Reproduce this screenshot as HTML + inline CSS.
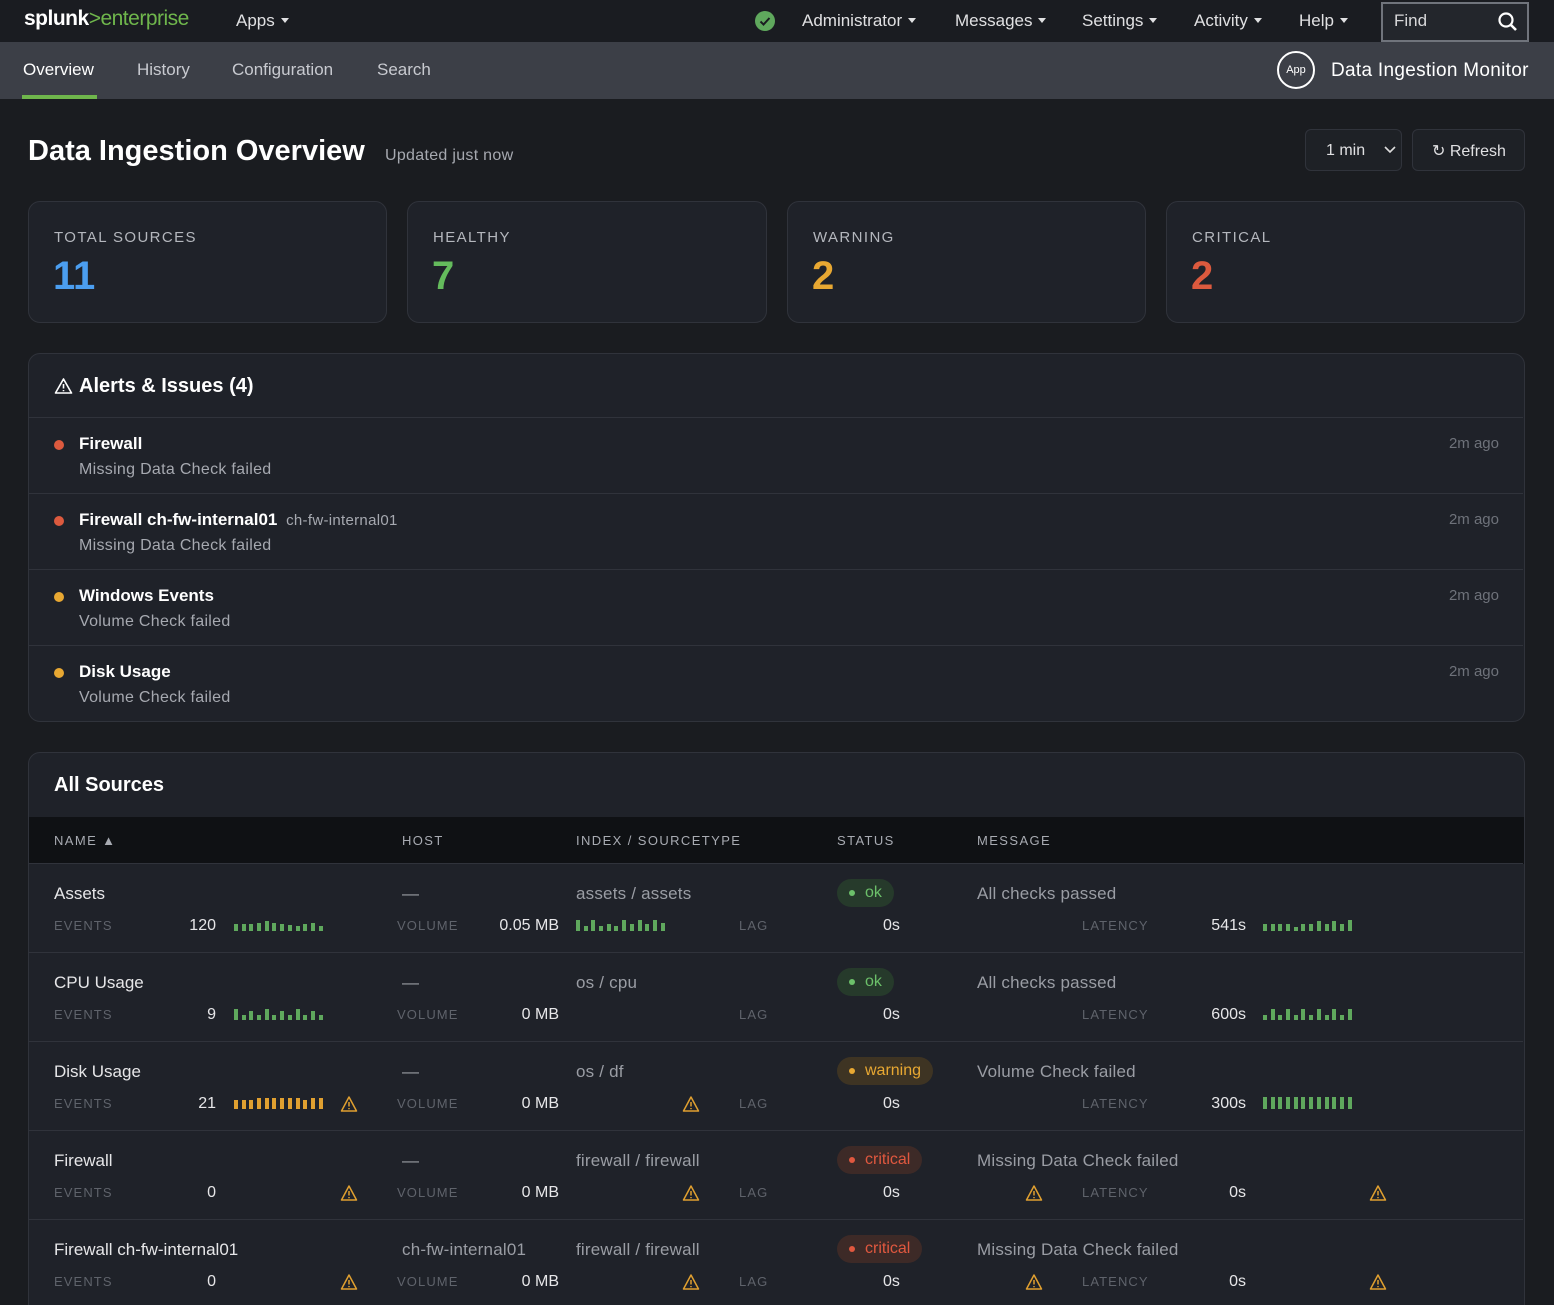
<!DOCTYPE html>
<html style="overflow:hidden"><head><meta charset="utf-8"><style>
*{box-sizing:border-box;margin:0;padding:0}
html,body{width:1554px;height:1305px;overflow:hidden}
body{background:#1a1c20;font-family:"Liberation Sans",sans-serif;color:#e8e8ea;position:relative}
.a{position:absolute;white-space:nowrap}
.top{position:absolute;left:0;top:0;width:1554px;height:42px;background:#1a1c21}
.sub{position:absolute;left:0;top:42px;width:1554px;height:57px;background:#3c3f47}
.nav{font-size:17px;color:#e0e0e2;top:11px}
.tri{display:inline-block;width:0;height:0;border-left:4px solid transparent;border-right:4px solid transparent;border-top:5px solid #e0e0e2;margin-left:6px;vertical-align:3px}
.tab{font-size:17px;color:#c8cad0;top:60px}
.card{position:absolute;background:#1f2229;border:1px solid #30333b;border-radius:12px}
.lbl{font-size:15px;letter-spacing:1.4px;color:#b4b7bd}
.num{font-size:40px;font-weight:bold}
.arow{position:absolute;left:29px;width:1494px;height:76px;border-top:1px solid #30333b}
.dot{position:absolute;left:25px;top:22px;width:10px;height:10px;border-radius:50%}
.at{position:absolute;left:50px;top:16px;font-size:17px;font-weight:bold;color:#fff}
.as{position:absolute;left:50px;top:43px;font-size:16px;color:#a6a9b0;letter-spacing:0.3px}
.ago{position:absolute;right:24px;top:17px;font-size:15px;color:#6e727a}
.row{position:absolute;left:29px;width:1494px;height:89px;border-top:1px solid #30333b}
.n{position:absolute;top:20px;font-size:17px;color:#e6e6e8;white-space:nowrap}
.g{position:absolute;top:20px;font-size:17px;color:#9a9da4;white-space:nowrap;letter-spacing:0.2px}
.k{position:absolute;top:54px;font-size:13px;letter-spacing:1.1px;color:#5f636b}
.v{position:absolute;top:53px;font-size:16px;color:#e6e6e8;text-align:right;white-space:nowrap}
.sp{position:absolute;top:55px;height:12px;display:flex;align-items:flex-end;gap:3.7px}
.sp i{display:block;width:4px;background:#5fa85d}
.sp.y i{background:#e0a030}
.w{position:absolute;top:53px;width:18px;height:18px}
.pill{position:absolute;top:15px;height:28px;border-radius:14px;font-size:16px;padding:0 12px 0 28px;line-height:28px}
.pill:before{content:"";position:absolute;left:12px;top:11px;width:6px;height:6px;border-radius:50%;background:currentColor}
.ok{background:#263a2b;color:#6cc06a}
.wa{background:#3e3423;color:#e8a832}
.cr{background:#3d2a27;color:#e0583f}
.th{font-size:13px;letter-spacing:1.4px;color:#a8abb2;top:833px}
</style></head><body>
<div class="top"></div>
<div class="a" style="left:24px;top:7px;font-size:21px;font-weight:bold;color:#fff;letter-spacing:-0.5px">splunk<span style="color:#6fb64c;font-weight:normal">&gt;enterprise</span></div>
<div class="a nav" style="left:236px">Apps<span class="tri"></span></div>
<svg class="a" style="left:754px;top:10px" width="22" height="22"><circle cx="11" cy="11" r="10" fill="#5fa85d"/><path d="M6.5 11.5l3 3 6-6.5" stroke="#1a1c21" stroke-width="2" fill="none"/></svg>
<div class="a nav" style="left:802px">Administrator<span class="tri"></span></div>
<div class="a nav" style="left:955px">Messages<span class="tri"></span></div>
<div class="a nav" style="left:1082px">Settings<span class="tri"></span></div>
<div class="a nav" style="left:1194px">Activity<span class="tri"></span></div>
<div class="a nav" style="left:1299px">Help<span class="tri"></span></div>
<div class="a" style="left:1381px;top:2px;width:148px;height:40px;border:2px solid #70747c;background:#23262c"></div>
<div class="a" style="left:1394px;top:11px;font-size:17px;color:#d8d8da">Find</div>
<svg class="a" style="left:1497px;top:11px" width="22" height="22"><circle cx="9" cy="9" r="6.5" stroke="#fff" stroke-width="2.2" fill="none"/><path d="M14 14l5 5" stroke="#fff" stroke-width="2.6"/></svg>
<div class="sub"></div>
<div class="a tab" style="left:23px;color:#fff">Overview</div>
<div class="a" style="left:22px;top:95px;width:75px;height:4px;background:#6fb64c"></div>
<div class="a tab" style="left:137px">History</div>
<div class="a tab" style="left:232px">Configuration</div>
<div class="a tab" style="left:377px">Search</div>
<div class="a" style="left:1277px;top:51px;width:38px;height:38px;border:2px solid #fff;border-radius:50%;font-size:11px;color:#fff;text-align:center;line-height:34px">App</div>
<div class="a" style="left:1331px;top:60px;font-size:19px;color:#fff;letter-spacing:0.3px">Data Ingestion Monitor</div>

<div class="a" style="left:28px;top:135px;font-size:29px;font-weight:bold;color:#fff">Data Ingestion Overview</div>
<div class="a" style="left:385px;top:147px;font-size:16px;color:#a6a9b0;letter-spacing:0.3px">Updated just now</div>
<div class="a" style="left:1305px;top:129px;width:97px;height:42px;border:1px solid #30333b;border-radius:6px;background:#1e2126"></div>
<div class="a" style="left:1326px;top:142px;font-size:16px;color:#e0e0e2">1 min</div>
<svg class="a" style="left:1384px;top:145px" width="12" height="10"><path d="M1 2l5 5 5-5" stroke="#ddd" stroke-width="1.6" fill="none"/></svg>
<div class="a" style="left:1412px;top:129px;width:113px;height:42px;border:1px solid #30333b;border-radius:6px;background:#1e2126"></div>
<div class="a" style="left:1432px;top:141px;font-size:16px;color:#e0e0e2">↻ Refresh</div>

<div class="card" style="left:28px;top:201px;width:359px;height:122px"></div>
<div class="card" style="left:407px;top:201px;width:360px;height:122px"></div>
<div class="card" style="left:787px;top:201px;width:359px;height:122px"></div>
<div class="card" style="left:1166px;top:201px;width:359px;height:122px"></div>
<div class="a lbl" style="left:54px;top:229px">TOTAL SOURCES</div>
<div class="a num" style="left:53px;top:254px;color:#4b9ef0">11</div>
<div class="a lbl" style="left:433px;top:229px">HEALTHY</div>
<div class="a num" style="left:432px;top:254px;color:#64bb5c">7</div>
<div class="a lbl" style="left:813px;top:229px">WARNING</div>
<div class="a num" style="left:812px;top:254px;color:#e8a832">2</div>
<div class="a lbl" style="left:1192px;top:229px">CRITICAL</div>
<div class="a num" style="left:1191px;top:254px;color:#dc5a3e">2</div>

<div class="card" style="left:28px;top:353px;width:1497px;height:369px"></div>
<svg class="a" style="left:54px;top:377px" width="19" height="18"><path d="M9.5 2L17.5 16H1.5Z" stroke="#fff" stroke-width="1.6" fill="none" stroke-linejoin="round"/><path d="M9.5 7v4.5M9.5 13v1.2" stroke="#fff" stroke-width="1.6"/></svg>
<div class="a" style="left:79px;top:375px;font-size:20px;font-weight:bold;color:#fff">Alerts &amp; Issues (4)</div>
<div class="arow" style="top:417px"><div class="dot" style="background:#dc5a3e"></div><div class="at">Firewall</div><div class="as">Missing Data Check failed</div><div class="ago">2m ago</div></div>
<div class="arow" style="top:493px"><div class="dot" style="background:#dc5a3e"></div><div class="at">Firewall ch-fw-internal01 <span style="font-weight:normal;font-size:15px;color:#a6a9b0;margin-left:4px;letter-spacing:0.3px">ch-fw-internal01</span></div><div class="as">Missing Data Check failed</div><div class="ago">2m ago</div></div>
<div class="arow" style="top:569px"><div class="dot" style="background:#e8a832"></div><div class="at">Windows Events</div><div class="as">Volume Check failed</div><div class="ago">2m ago</div></div>
<div class="arow" style="top:645px"><div class="dot" style="background:#e8a832"></div><div class="at">Disk Usage</div><div class="as">Volume Check failed</div><div class="ago">2m ago</div></div>

<div class="card" style="left:28px;top:752px;width:1497px;height:580px"></div>
<div class="a" style="left:54px;top:774px;font-size:20px;font-weight:bold;color:#fff">All Sources</div>
<div class="a" style="left:29px;top:817px;width:1495px;height:47px;background:#0f1114"></div>
<div class="a th" style="left:54px">NAME ▲</div>
<div class="a th" style="left:402px">HOST</div>
<div class="a th" style="left:576px">INDEX / SOURCETYPE</div>
<div class="a th" style="left:837px">STATUS</div>
<div class="a th" style="left:977px">MESSAGE</div>

<svg width="0" height="0" style="position:absolute"><defs><g id="wt"><path d="M9 2L16.5 16H1.5Z" stroke="#e0a030" stroke-width="1.5" fill="none" stroke-linejoin="round"/><path d="M9 7v4.5M9 13v1.3" stroke="#e0a030" stroke-width="1.5"/></g></defs></svg>

<div class="row" style="top:863px">
<div class="n" style="left:25px">Assets</div><div class="g" style="left:373px">—</div><div class="g" style="left:547px">assets / assets</div>
<div class="pill ok" style="left:808px">ok</div><div class="g" style="left:948px">All checks passed</div>
<div class="k" style="left:25px">EVENTS</div><div class="v" style="right:1307px">120</div>
<div class="sp" style="left:205px"><i style="height:7px"></i><i style="height:7px"></i><i style="height:7px"></i><i style="height:8px"></i><i style="height:10px"></i><i style="height:8px"></i><i style="height:7px"></i><i style="height:6px"></i><i style="height:5px"></i><i style="height:7px"></i><i style="height:8px"></i><i style="height:5px"></i></div>
<div class="k" style="left:368px">VOLUME</div><div class="v" style="right:964px">0.05 MB</div>
<div class="sp" style="left:547px"><i style="height:11px"></i><i style="height:5px"></i><i style="height:11px"></i><i style="height:5px"></i><i style="height:7px"></i><i style="height:5px"></i><i style="height:11px"></i><i style="height:7px"></i><i style="height:11px"></i><i style="height:7px"></i><i style="height:11px"></i><i style="height:8px"></i></div>
<div class="k" style="left:710px">LAG</div><div class="v" style="left:854px">0s</div>
<div class="k" style="left:1053px">LATENCY</div><div class="v" style="right:277px">541s</div>
<div class="sp" style="left:1234px"><i style="height:7px"></i><i style="height:7px"></i><i style="height:7px"></i><i style="height:7px"></i><i style="height:4px"></i><i style="height:7px"></i><i style="height:7px"></i><i style="height:10px"></i><i style="height:7px"></i><i style="height:10px"></i><i style="height:7px"></i><i style="height:11px"></i></div>
</div>
<div class="row" style="top:952px">
<div class="n" style="left:25px">CPU Usage</div><div class="g" style="left:373px">—</div><div class="g" style="left:547px">os / cpu</div>
<div class="pill ok" style="left:808px">ok</div><div class="g" style="left:948px">All checks passed</div>
<div class="k" style="left:25px">EVENTS</div><div class="v" style="right:1307px">9</div>
<div class="sp" style="left:205px"><i style="height:11px"></i><i style="height:5px"></i><i style="height:9px"></i><i style="height:5px"></i><i style="height:11px"></i><i style="height:5px"></i><i style="height:9px"></i><i style="height:5px"></i><i style="height:11px"></i><i style="height:5px"></i><i style="height:9px"></i><i style="height:5px"></i></div>
<div class="k" style="left:368px">VOLUME</div><div class="v" style="right:964px">0 MB</div>
<div class="k" style="left:710px">LAG</div><div class="v" style="left:854px">0s</div>
<div class="k" style="left:1053px">LATENCY</div><div class="v" style="right:277px">600s</div>
<div class="sp" style="left:1234px"><i style="height:5px"></i><i style="height:11px"></i><i style="height:5px"></i><i style="height:11px"></i><i style="height:5px"></i><i style="height:11px"></i><i style="height:5px"></i><i style="height:11px"></i><i style="height:5px"></i><i style="height:11px"></i><i style="height:5px"></i><i style="height:11px"></i></div>
</div>
<div class="row" style="top:1041px">
<div class="n" style="left:25px">Disk Usage</div><div class="g" style="left:373px">—</div><div class="g" style="left:547px">os / df</div>
<div class="pill wa" style="left:808px">warning</div><div class="g" style="left:948px">Volume Check failed</div>
<div class="k" style="left:25px">EVENTS</div><div class="v" style="right:1307px">21</div>
<div class="sp y" style="left:205px"><i style="height:9px"></i><i style="height:9px"></i><i style="height:9px"></i><i style="height:11px"></i><i style="height:11px"></i><i style="height:11px"></i><i style="height:11px"></i><i style="height:11px"></i><i style="height:11px"></i><i style="height:9px"></i><i style="height:11px"></i><i style="height:11px"></i></div>
<svg class="w" style="left:311px"><use href="#wt"/></svg>
<div class="k" style="left:368px">VOLUME</div><div class="v" style="right:964px">0 MB</div>
<svg class="w" style="left:653px"><use href="#wt"/></svg>
<div class="k" style="left:710px">LAG</div><div class="v" style="left:854px">0s</div>
<div class="k" style="left:1053px">LATENCY</div><div class="v" style="right:277px">300s</div>
<div class="sp" style="left:1234px"><i style="height:12px"></i><i style="height:12px"></i><i style="height:12px"></i><i style="height:12px"></i><i style="height:12px"></i><i style="height:12px"></i><i style="height:12px"></i><i style="height:12px"></i><i style="height:12px"></i><i style="height:12px"></i><i style="height:12px"></i><i style="height:12px"></i></div>
</div>
<div class="row" style="top:1130px">
<div class="n" style="left:25px">Firewall</div><div class="g" style="left:373px">—</div><div class="g" style="left:547px">firewall / firewall</div>
<div class="pill cr" style="left:808px">critical</div><div class="g" style="left:948px">Missing Data Check failed</div>
<div class="k" style="left:25px">EVENTS</div><div class="v" style="right:1307px">0</div>
<svg class="w" style="left:311px"><use href="#wt"/></svg>
<div class="k" style="left:368px">VOLUME</div><div class="v" style="right:964px">0 MB</div>
<svg class="w" style="left:653px"><use href="#wt"/></svg>
<div class="k" style="left:710px">LAG</div><div class="v" style="left:854px">0s</div>
<svg class="w" style="left:996px"><use href="#wt"/></svg>
<div class="k" style="left:1053px">LATENCY</div><div class="v" style="right:277px">0s</div>
<svg class="w" style="left:1340px"><use href="#wt"/></svg>
</div>
<div class="row" style="top:1219px">
<div class="n" style="left:25px">Firewall ch-fw-internal01</div><div class="g" style="left:373px">ch-fw-internal01</div><div class="g" style="left:547px">firewall / firewall</div>
<div class="pill cr" style="left:808px">critical</div><div class="g" style="left:948px">Missing Data Check failed</div>
<div class="k" style="left:25px">EVENTS</div><div class="v" style="right:1307px">0</div>
<svg class="w" style="left:311px"><use href="#wt"/></svg>
<div class="k" style="left:368px">VOLUME</div><div class="v" style="right:964px">0 MB</div>
<svg class="w" style="left:653px"><use href="#wt"/></svg>
<div class="k" style="left:710px">LAG</div><div class="v" style="left:854px">0s</div>
<svg class="w" style="left:996px"><use href="#wt"/></svg>
<div class="k" style="left:1053px">LATENCY</div><div class="v" style="right:277px">0s</div>
<svg class="w" style="left:1340px"><use href="#wt"/></svg>
</div>
</body></html>
